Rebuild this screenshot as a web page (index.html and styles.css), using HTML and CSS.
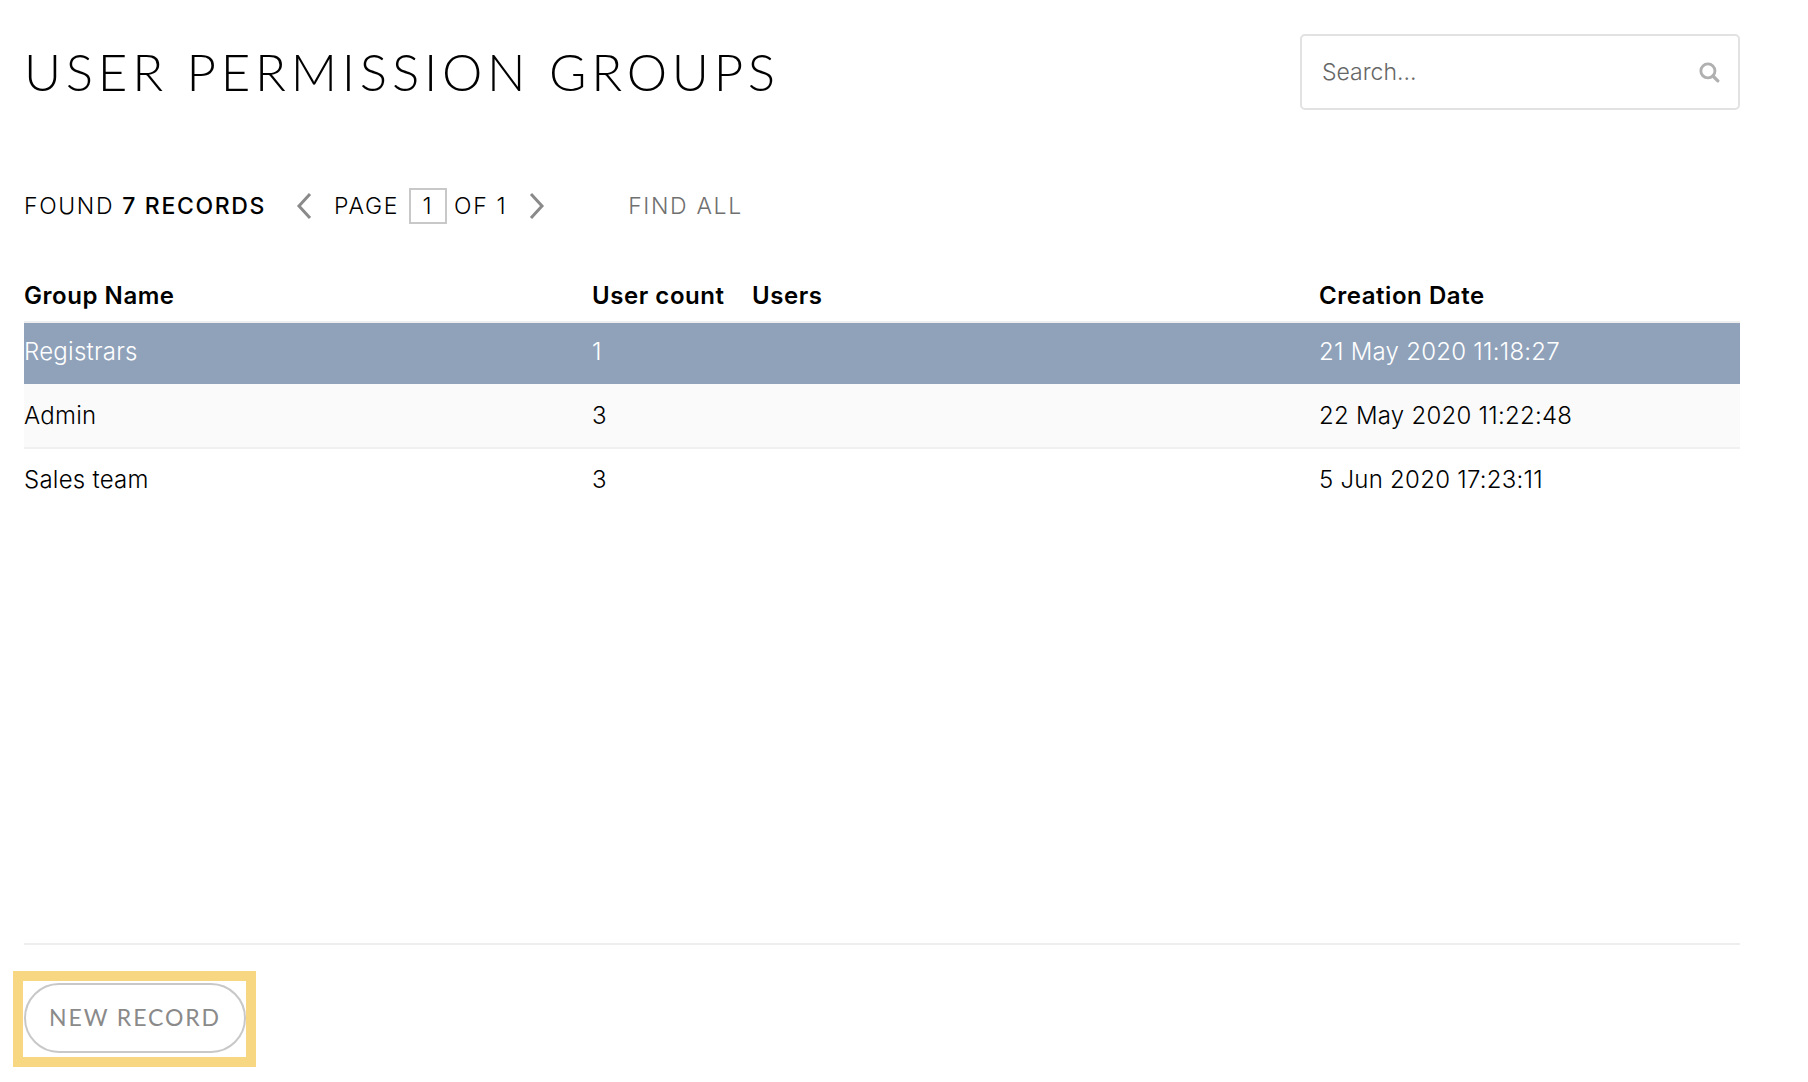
FILE: index.html
```html
<!DOCTYPE html>
<html lang="en">
<head>
<meta charset="utf-8">
<title>User Permission Groups</title>
<link rel="stylesheet" href="styles.css">
</head>
<body>
<div class="page">
  <header class="top">
    <h1 class="title">USER PERMISSION GROUPS</h1>
    <div class="search">
      <span class="search-text">Search...</span>
      <svg class="search-icon" width="22" height="22" viewBox="0 0 20 20"><circle cx="9" cy="9" r="6.4" fill="none" stroke="#b0b0b0" stroke-width="2.6"/><path d="M13.6 13.6 L18 18" stroke="#b0b0b0" stroke-width="3" stroke-linecap="round"/></svg>
    </div>
  </header>
  <nav class="pager">
    <span class="found">FOUND <b>7 RECORDS</b></span>
    <svg class="chev-l" width="18" height="28" viewBox="0 0 18 28"><path d="M15 2 L4 14 L15 26" fill="none" stroke="#8a8a8a" stroke-width="3"/></svg>
    <span class="page-label">PAGE</span>
    <span class="page-box">1</span>
    <span class="of">OF 1</span>
    <svg class="chev-r" width="18" height="28" viewBox="0 0 18 28"><path d="M3 2 L14 14 L3 26" fill="none" stroke="#8a8a8a" stroke-width="3"/></svg>
    <span class="find-all">FIND ALL</span>
  </nav>
  <table class="grid">
    <colgroup><col class="c1"><col class="c2"><col class="c3"><col></colgroup>
    <thead>
      <tr><th>Group Name</th><th>User count</th><th>Users</th><th>Creation Date</th></tr>
    </thead>
    <tbody>
      <tr class="selected"><td>Registrars</td><td>1</td><td></td><td>21 May 2020 11:18:27</td></tr>
      <tr class="alt"><td>Admin</td><td>3</td><td></td><td>22 May 2020 11:22:48</td></tr>
      <tr><td>Sales team</td><td>3</td><td></td><td>5 Jun 2020 17:23:11</td></tr>
    </tbody>
  </table>
  <footer class="foot">
    <div class="highlight"><button class="new-record">NEW RECORD</button></div>
  </footer>
</div>
</body>
</html>
```
FILE: styles.css
```css
* { box-sizing: border-box; }
html, body { margin: 0; padding: 0; background: #fff; }
body { font-family: Inter, Lato, sans-serif; color: #000; }
.page { width: 1716px; margin-left: 24px; height: 1082px; display: flex; flex-direction: column; }
.top { display: flex; justify-content: space-between; align-items: flex-start; padding-top: 34px; height: 185px; }
.title { margin: 0; font-family: Lato, sans-serif; font-size: 51px; line-height: 76px; font-weight: 300; letter-spacing: 4.75px; white-space: nowrap; }
.search { width: 440px; height: 76px; border: 2px solid #e2e2e2; border-radius: 5px; display: flex; align-items: center; justify-content: space-between; padding: 0 18px 0 20px; }
.search-text { font-size: 23px; font-weight: 300; color: #666; }
.search-icon { display: block; }
.pager { display: flex; align-items: center; height: 40px; padding-top: 1px; font-size: 23px; font-weight: 300; letter-spacing: 1.65px; white-space: nowrap; }
.found b { font-weight: 500; }
.chev-l { margin-left: 29px; }
.page-label { margin-left: 21px; }
.page-box { margin-left: 10px; width: 38px; height: 36px; border: 2px solid #c8c8c8; padding-right: 2px; display: flex; align-items: center; justify-content: center; letter-spacing: 0; }
.of { margin-left: 7px; }
.chev-r { margin-left: 21px; }
.find-all { margin-left: 82px; color: #707070; }
.grid { width: 1716px; border-collapse: collapse; table-layout: fixed; margin-top: 43px; font-size: 24px; letter-spacing: 0.25px; }
.c1 { width: 568px; }
.c2 { width: 160px; }
.c3 { width: 567px; }
.grid th { text-align: left; font-weight: 600; height: 54px; padding: 2px 0 0; border-bottom: 2px solid #eee; font-size: 24px; letter-spacing: 0.55px; }
.grid td { height: 62px; padding: 0 0 3px; font-weight: 300; }
.grid .selected td { padding-bottom: 5px; }
.grid .selected { background: #8fa2ba; color: #fff; }
.grid .alt { background: #fafafa; border-bottom: 2px solid #f0f0f0; }
.grid .alt td { height: 64px; padding-bottom: 1px; }
.grid tbody tr:last-child td { height: 64px; }
.foot { margin-top: auto; margin-bottom: 15px; width: 1716px; border-top: 2px solid #eeeeee; padding-top: 26px; }
.highlight { width: 243px; height: 96px; margin-left: -11px; border: 10px solid #f8d782; padding: 2px 0 0 1px; }
.new-record { display: block; width: 222px; height: 70px; border: 2px solid #c8c8c8; border-radius: 35px; background: #fff; color: #8a8a8a; font-family: Lato, sans-serif; font-size: 23px; font-weight: 400; letter-spacing: 1.9px; padding: 0 0 2px; }
```
